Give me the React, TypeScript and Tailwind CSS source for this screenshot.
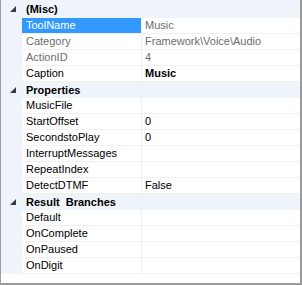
import React from "react";

type Row =
  | { kind: "cat"; label: string }
  | { kind: "prop"; name: string; value?: string; gray?: boolean; bold?: boolean; selected?: boolean };

const rows: Row[] = [
  { kind: "cat", label: "(Misc)" },
  { kind: "prop", name: "ToolName", value: "Music", gray: true, selected: true },
  { kind: "prop", name: "Category", value: "Framework\\Voice\\Audio", gray: true },
  { kind: "prop", name: "ActionID", value: "4", gray: true },
  { kind: "prop", name: "Caption", value: "Music", bold: true },
  { kind: "cat", label: "Properties" },
  { kind: "prop", name: "MusicFile", value: "" },
  { kind: "prop", name: "StartOffset", value: "0" },
  { kind: "prop", name: "SecondstoPlay", value: "0" },
  { kind: "prop", name: "InterruptMessages", value: "" },
  { kind: "prop", name: "RepeatIndex", value: "" },
  { kind: "prop", name: "DetectDTMF", value: "False" },
  { kind: "cat", label: "Result  Branches" },
  { kind: "prop", name: "Default", value: "" },
  { kind: "prop", name: "OnComplete", value: "" },
  { kind: "prop", name: "OnPaused", value: "" },
  { kind: "prop", name: "OnDigit", value: "" },
];

function Arrow() {
  return (
    <svg width="21" height="16" viewBox="0 0 21 16" className="block">
      <polygon points="15,5 15,11 9,11" fill="#3c3c3c" />
    </svg>
  );
}

export default function App() {
  return (
    <div
      className="w-[302px] h-[285px] bg-white border-l border-l-[#a0a0a0] border-r-2 border-r-[#9a9a9a] border-b-2 border-b-[#9a9a9a] flex flex-col text-[11px] leading-none"
      style={{ fontFamily: '"Liberation Sans", Arial, sans-serif' }}
    >
      {rows.map((r, i) => {
        const first = i === 0;
        if (r.kind === "cat") {
          return (
            <div
              key={i}
              className={`flex items-end bg-[#eff3fa] ${first ? "h-[18px] pb-[1px]" : "h-[16px]"}`}
            >
              <div className="w-[21px] h-[16px] flex items-center">
                <Arrow />
              </div>
              <div className="pl-[4px] h-[16px] flex items-center font-bold text-black whitespace-pre">
                {r.label}
              </div>
            </div>
          );
        }
        return (
          <div key={i} className="flex h-[16px]">
            <div className="w-[21px] bg-[#eff3fa]" />
            <div
              className={`w-[119px] flex items-center pl-[4px] border-b border-b-[#f0f0f0] ${
                r.selected ? "bg-[#3399ff] text-white border-b-[#3399ff]" : r.gray ? "text-[#6d6d6d]" : "text-black"
              }`}
            >
              {r.name}
            </div>
            <div className="w-px bg-[#f0f0f0]" />
            <div
              className={`flex-1 flex items-center pl-[3px] border-b border-b-[#f0f0f0] ${
                r.gray ? "text-[#6d6d6d]" : "text-black"
              } ${r.bold ? "font-bold" : ""}`}
            >
              {r.value}
            </div>
          </div>
        );
      })}
      <div className="flex-1 bg-white" />
    </div>
  );
}
